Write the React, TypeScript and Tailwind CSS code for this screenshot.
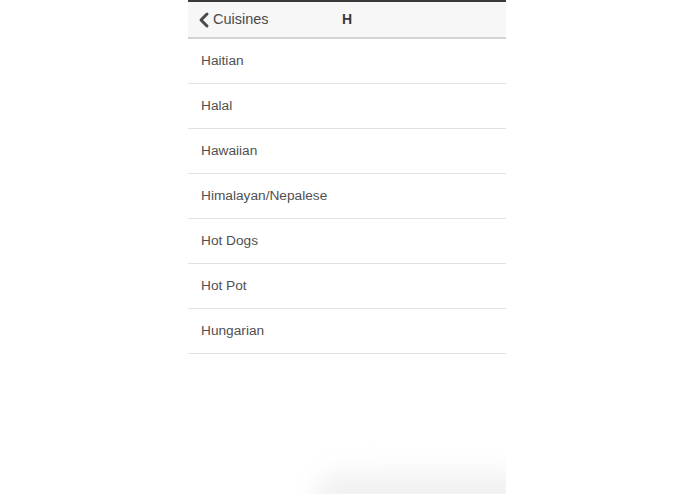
import { ChevronLeft } from "lucide-react";

const cuisines = [
  "Haitian",
  "Halal",
  "Hawaiian",
  "Himalayan/Nepalese",
  "Hot Dogs",
  "Hot Pot",
  "Hungarian",
];

export default function App() {
  return (
    <div
      className="flex h-[494px] w-full justify-center bg-white pr-[1px]"
      style={{ fontFamily: '"Liberation Sans", Arial, sans-serif' }}
    >
      <div className="relative flex w-[318px] flex-col overflow-hidden bg-white">
        <div className="h-[2px] bg-[#3a3a3a]" />
        <header className="relative flex h-[37px] items-center border-b-2 border-[#d4d4d4] bg-[#f7f7f7]">
          <button type="button" className="flex items-center pl-[4px] text-[14.5px] text-[#4a4a4a]">
            <ChevronLeft className="size-[24px]" strokeWidth={3} />
            <span className="-ml-[3px]">Cuisines</span>
          </button>
          <h1 className="absolute left-1/2 -translate-x-1/2 text-[14px] font-bold text-[#3a3a3a]">H</h1>
        </header>
        <ul>
          {cuisines.map((c) => (
            <li
              key={c}
              className="flex h-[45px] items-center border-b border-[#e2e2e2] pl-[13px] text-[13.7px] text-[#505050]"
            >
              {c}
            </li>
          ))}
        </ul>
        {/* soft shadow lying over the bottom edge */}
        <div className="pointer-events-none absolute bottom-[-10px] right-[-20px] h-[42px] w-[210px] rounded-tl-[40px] bg-gradient-to-b from-white to-[#e6e6e6] blur-md" />
      </div>
    </div>
  );
}
